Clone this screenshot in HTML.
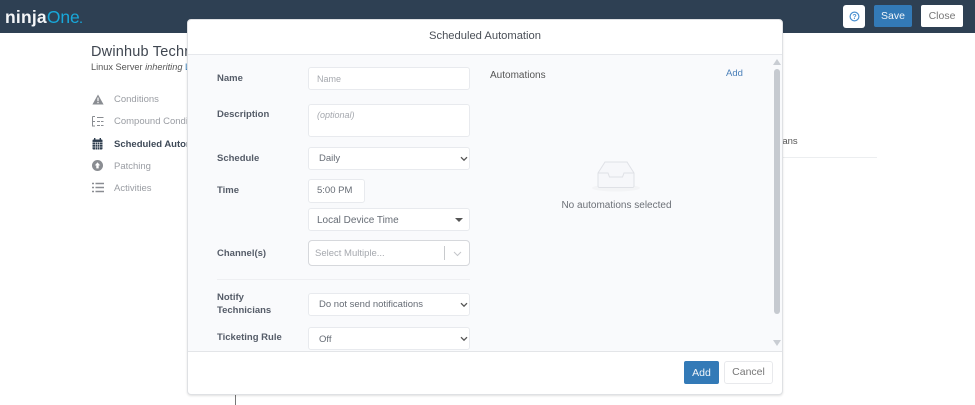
<!DOCTYPE html>
<html><head><meta charset="utf-8"><style>
*{box-sizing:border-box}
html,body{margin:0;padding:0;width:975px;height:405px;overflow:hidden;background:#fff;font-family:"Liberation Sans",sans-serif;position:relative}
#w{position:absolute;left:0;top:0;width:975px;height:405px;filter:blur(.3px)}
.a{position:absolute;white-space:nowrap}
.l{position:absolute;white-space:nowrap;font-size:9.5px;font-weight:bold;color:#555c68;line-height:12px}
.f{position:absolute;background:#fff;border:1px solid #e8eaee;border-radius:3px;font-size:9.5px;color:#666c75;line-height:12px}
.n{position:absolute;left:114px;font-size:9.5px;color:#9a9da3;line-height:12px;white-space:nowrap}
svg{position:absolute;overflow:visible}
</style></head><body><div id="w">
<div class="a" style="left:0;top:0;width:975px;height:33px;background:#2e4053"></div>
<div class="a" style="left:5px;top:6px;font-size:17.5px;line-height:22px;font-weight:bold;color:#f4f6f8;letter-spacing:.2px">ninja<span style="color:#18a8da;font-weight:normal;letter-spacing:-.1px">One</span><span style="color:#18a8da;font-size:10px">.</span></div>
<div class="a" style="left:843px;top:5px;width:22px;height:23px;background:#fff;border-radius:3px"></div>
<svg style="left:849px;top:11px" width="11" height="11" viewBox="0 0 11 11"><circle cx="5.5" cy="5.5" r="4.4" fill="none" stroke="#4a90d0" stroke-width="1.2"/><text x="5.5" y="8" font-size="7" font-weight="bold" text-anchor="middle" fill="#4a90d0" font-family="Liberation Sans">?</text></svg>
<div class="a" style="left:874px;top:5px;width:38px;height:22px;background:#337ab7;border-radius:2px;color:#f2f6fa;font-size:10.5px;line-height:22px;text-align:center">Save</div>
<div class="a" style="left:921px;top:5px;width:42px;height:22px;background:#fff;border-radius:2px;color:#777;font-size:10.5px;line-height:22px;text-align:center">Close</div>

<div class="a" style="left:91px;top:43px;font-size:14.5px;line-height:18px;color:#3f4650;letter-spacing:.2px">Dwinhub Technicians</div>
<div class="a" style="left:91px;top:61px;font-size:9.2px;line-height:12px;color:#555">Linux Server <i>inheriting</i> <span style="color:#337ab7">Linux</span></div>

<svg style="left:92px;top:94px" width="12" height="11" viewBox="0 0 12 11"><path d="M6 .5 11.6 10.5H.4Z" fill="#8a8d92"/><rect x="5.4" y="3.6" width="1.2" height="3.6" fill="#fff"/><rect x="5.4" y="8" width="1.2" height="1.2" fill="#fff"/></svg>
<div class="n" style="top:94px">Conditions</div>
<svg style="left:92px;top:116px" width="12" height="11" viewBox="0 0 12 11" fill="none" stroke="#8a8d92" stroke-width="1"><path d="M.5 .5H3M.5 .5V10H3M1 5.5H3M5 1.5H11.5M5 5.5H8M9 5.5H11.5M5 9.5H8M9 9.5H11.5"/></svg>
<div class="n" style="top:116px">Compound Conditions</div>
<svg style="left:92px;top:138px" width="11" height="12" viewBox="0 0 11 12"><rect x=".5" y="1.5" width="10" height="10" rx="1" fill="#2e3d4e"/><rect x="2" y="0" width="1.4" height="2.5" fill="#2e3d4e"/><rect x="7.6" y="0" width="1.4" height="2.5" fill="#2e3d4e"/><path d="M.5 4.2H10.5M.5 6.5H10.5M.5 9H10.5M3.5 4V11.5M5.5 4V11.5M7.5 4V11.5" stroke="#fff" stroke-width=".5"/></svg>
<div class="n" style="top:139px;color:#3f4a58;font-weight:bold;left:114px">Scheduled Automations</div>
<svg style="left:92px;top:160px" width="11" height="11" viewBox="0 0 11 11"><circle cx="5.5" cy="5.5" r="5.5" fill="#8a8d92"/><path d="M5.5 2.4 8.2 5.4H6.7V8.4H4.3V5.4H2.8Z" fill="#fff"/></svg>
<div class="n" style="top:161px">Patching</div>
<svg style="left:92px;top:182px" width="12" height="11" viewBox="0 0 12 11" fill="none" stroke="#8a8d92" stroke-width="1.4"><path d="M0 1.5H2M3.5 1.5H12M0 5.5H2M3.5 5.5H12M0 9.5H2M3.5 9.5H12"/></svg>
<div class="n" style="top:183px">Activities</div>

<div class="a" style="left:748px;top:136px;font-size:9.5px;line-height:12px;color:#555">Technicians</div>
<div class="a" style="left:782px;top:157px;width:95px;height:1px;background:#eceef0"></div>
<div class="a" style="left:235px;top:394px;width:1px;height:11px;background:#777"></div>

<div class="a" style="left:187px;top:19px;width:596px;height:376px;background:#fff;border:1px solid #dfe1e4;border-radius:4px;box-shadow:0 1px 2px rgba(0,0,0,.12)"></div>
<div class="a" style="left:188px;top:54px;width:594px;height:298px;background:#f9fafc;border-top:1px solid #e6e8ec;border-bottom:1px solid #e3e5e8"></div>
<div class="a" style="left:188px;top:29px;width:594px;text-align:center;font-size:11.2px;line-height:14px;color:#4a4f57">Scheduled Automation</div>

<div class="l" style="left:217px;top:73px">Name</div>
<div class="f" style="left:308px;top:67px;width:162px;height:23px;padding:5px 8px;color:#a5a8ae;font-size:9px">Name</div>
<div class="l" style="left:217px;top:109px">Description</div>
<div class="f" style="left:308px;top:104px;width:162px;height:33px;padding:4px 8px;color:#a5a8ae;font-size:9px;font-style:italic">(optional)</div>
<div class="l" style="left:217px;top:153px">Schedule</div>
<div class="f" style="left:308px;top:147px;width:162px;height:23px;padding:5px 10px">Daily</div>
<svg style="left:460px;top:156px" width="8" height="6" viewBox="0 0 8 6"><path d="M1 1.2 4 4.2 7 1.2" fill="none" stroke="#555" stroke-width="1.3"/></svg>
<div class="l" style="left:217px;top:185px">Time</div>
<div class="f" style="left:308px;top:179px;width:57px;height:24px;padding:5px 8px">5:00 PM</div>
<div class="f" style="left:308px;top:208px;width:162px;height:23px;padding:6px 8px;font-size:10px">Local Device Time</div>
<svg style="left:455px;top:218px" width="8" height="4" viewBox="0 0 8 4"><path d="M0 0H8L4 4Z" fill="#555"/></svg>
<div class="l" style="left:217px;top:248px">Channel(s)</div>
<div class="f" style="left:308px;top:240px;width:162px;height:26px;padding:7px 6px;color:#a5a8ae;border-color:#d6d8dc;border-radius:4px">Select Multiple...</div>
<div class="a" style="left:444px;top:246px;width:1px;height:14px;background:#c8cacd"></div>
<svg style="left:453px;top:251px" width="9" height="6" viewBox="0 0 9 6"><path d="M1 1 4.5 4.5 8 1" fill="none" stroke="#c4c6ca" stroke-width="1"/></svg>
<div class="a" style="left:217px;top:279px;width:253px;height:1px;background:#eeeff2"></div>
<div class="l" style="left:217px;top:292px;line-height:12.5px;white-space:normal;width:70px">Notify Technicians</div>
<div class="f" style="left:308px;top:293px;width:162px;height:23px;padding:5px 10px">Do not send notifications</div>
<svg style="left:460px;top:302px" width="8" height="6" viewBox="0 0 8 6"><path d="M1 1.2 4 4.2 7 1.2" fill="none" stroke="#555" stroke-width="1.3"/></svg>
<div class="l" style="left:217px;top:332px">Ticketing Rule</div>
<div class="f" style="left:308px;top:327px;width:162px;height:23px;padding:6px 10px">Off</div>
<svg style="left:460px;top:336px" width="8" height="6" viewBox="0 0 8 6"><path d="M1 1.2 4 4.2 7 1.2" fill="none" stroke="#555" stroke-width="1.3"/></svg>

<div class="a" style="left:490px;top:69px;font-size:10px;line-height:13px;color:#555">Automations</div>
<div class="a" style="left:726px;top:68px;font-size:9.5px;line-height:12px;color:#4a7fb8">Add</div>
<svg style="left:592px;top:161px" width="50" height="32" viewBox="0 0 50 32"><ellipse cx="24" cy="27" rx="24" ry="3.5" fill="#f3f4f6"/><path d="M6 12 13 1H35L42 12V25a1.5 1.5 0 0 1-1.5 1.5H7.5A1.5 1.5 0 0 1 6 25Z" fill="#f6f7fa" stroke="#dfe1e6" stroke-width="1"/><path d="M6 12H16L17.5 16H30.5L32 12H42" fill="none" stroke="#dfe1e6" stroke-width="1"/></svg>
<div class="a" style="left:490px;top:199px;width:253px;text-align:center;font-size:10px;line-height:13px;color:#6c7077">No automations selected</div>

<svg style="left:773px;top:59px" width="8" height="6" viewBox="0 0 8 6"><path d="M0 6 4 0 8 6Z" fill="#c9cdd3"/></svg>
<div class="a" style="left:774px;top:69px;width:6px;height:245px;background:#c6cad0;border-radius:3px"></div>
<svg style="left:773px;top:340px" width="8" height="6" viewBox="0 0 8 6"><path d="M0 0H8L4 6Z" fill="#c9cdd3"/></svg>

<div class="a" style="left:684px;top:361px;width:35px;height:23px;background:#337ab7;border-radius:2px;color:#f2f6fa;font-size:10.5px;line-height:23px;text-align:center;padding-top:1px">Add</div>
<div class="a" style="left:724px;top:361px;width:49px;height:23px;background:#fff;border:1px solid #e8e9ec;border-radius:3px;color:#777;font-size:10.5px;line-height:21px;text-align:center">Cancel</div>
</div></body></html>
